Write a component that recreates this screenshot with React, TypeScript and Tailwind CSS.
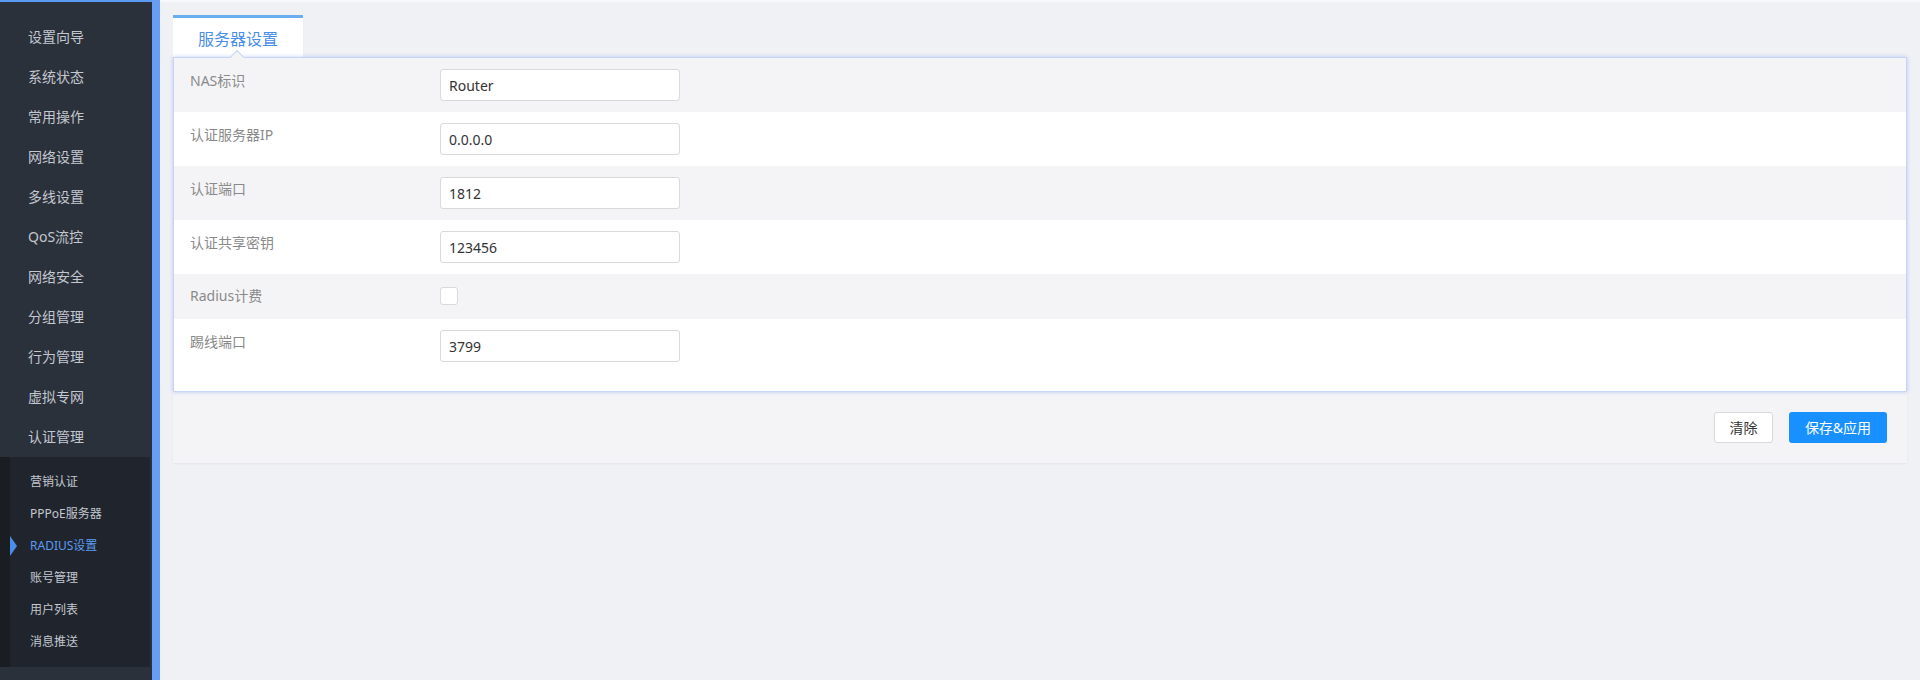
const font = { fontFamily: '"Noto Sans", "Noto Sans CJK SC", sans-serif' };

const menu = [
  '设置向导',
  '系统状态',
  '常用操作',
  '网络设置',
  '多线设置',
  'QoS流控',
  '网络安全',
  '分组管理',
  '行为管理',
  '虚拟专网',
  '认证管理'
];

const subMenu = ['营销认证', 'PPPoE服务器', 'RADIUS设置', '账号管理', '用户列表', '消息推送'];

interface Field {
  label: string;
  value?: string;
  checkbox?: boolean;
}

const fields: Field[] = [
  { label: 'NAS标识', value: 'Router' },
  { label: '认证服务器IP', value: '0.0.0.0' },
  { label: '认证端口', value: '1812' },
  { label: '认证共享密钥', value: '123456' },
  { label: 'Radius计费', checkbox: true },
  { label: '踢线端口', value: '3799' }
];

function Sidebar() {
  return (
    <div className="flex h-full w-[152px] shrink-0 flex-col border-t-2 border-[#5a9af0] bg-[#2b313b] pt-[14px]">
      {menu.map((item) => (
        <div key={item} className="flex h-10 items-center pl-[28px] text-[14px] text-[#c3c7cf]">
          {item}
        </div>
      ))}

      {/* Sub menu */}
      <div className="mr-[2px] mt-[1px] border-l-[10px] border-[#1a1d22] bg-[#20252d] py-[9px]">
        {subMenu.map((item) => {
          const active = item === 'RADIUS设置';
          return (
            <div
              key={item}
              className={`relative flex h-8 items-center pl-[20px] text-[12px] ${
                active ? 'text-[#5b9bf2]' : 'text-[#c3c7cf]'
              }`}
            >
              {active && (
                <span className="absolute left-0 top-[6px] h-0 w-0 border-y-[10px] border-l-[7px] border-y-transparent border-l-[#4a8ee8]" />
              )}
              {item}
            </div>
          );
        })}
      </div>
    </div>
  );
}

function FormRow({ field, index }: { field: Field; index: number }) {
  const bg = index % 2 === 0 ? 'bg-[#f4f4f6]' : 'bg-white';
  if (field.checkbox) {
    return (
      <div className={`flex h-[45px] items-start px-[16px] ${bg}`}>
        <div className="w-[250px] pt-[12px] text-[14px] leading-5 text-[#8a8a8a]">{field.label}</div>
        <div className="mt-[13px] h-[18px] w-[18px] rounded-[3px] border border-[#d9d9d9] bg-white" />
      </div>
    );
  }
  return (
    <div className={`flex h-[54px] items-start px-[16px] ${bg}`}>
      <div className="w-[250px] pt-[13px] text-[14px] leading-5 text-[#8a8a8a]">{field.label}</div>
      <div className="pt-[11px]">
        <div className="flex h-[32px] w-[240px] items-center rounded-[3px] border border-[#d9d9d9] bg-white px-[8px] text-[14px] text-[#333]">
          {field.value}
        </div>
      </div>
    </div>
  );
}

export default function App() {
  return (
    <div className="flex h-[680px] w-[1920px] overflow-hidden bg-[#f0f1f5]" style={font}>
      <Sidebar />
      <div className="h-full w-[8px] shrink-0 bg-[#679df3]" />

      <div className="flex-1 border-t-2 border-[#f7f8fa] px-[13px] pt-[13px]">
        {/* Tab */}
        <div className="flex">
          <div className="flex h-[42px] w-[130px] items-center justify-center border-t-[3px] border-[#6aaef0] bg-white pt-[2px] text-[16px] text-[#4a8ee8]">
            服务器设置
          </div>
        </div>

        {/* Panel */}
        <div className="relative border border-[#c6d4f5] bg-white pb-[18px] shadow-[0_0_4px_rgba(110,150,240,0.45)]">
          <div className="absolute left-[58px] top-[-6px] h-[10px] w-[10px] rotate-45 border-l border-t border-[#c6d4f5] bg-[#f4f4f6]" />
          <div className="relative">
            {fields.map((field, i) => (
              <FormRow key={field.label} field={field} index={i} />
            ))}
          </div>
        </div>

        {/* Footer */}
        <div className="flex h-[71px] items-center justify-end gap-[16px] bg-[#f4f4f6] pr-[20px] shadow-[0_1px_2px_rgba(0,0,0,0.05)]">
          <button className="h-[31px] w-[59px] rounded-[3px] border border-[#d9d9d9] bg-white text-[14px] text-[#333]">
            清除
          </button>
          <button className="h-[31px] w-[98px] rounded-[3px] bg-[#1890ff] text-[14px] text-white">
            保存&amp;应用
          </button>
        </div>
      </div>
    </div>
  );
}
